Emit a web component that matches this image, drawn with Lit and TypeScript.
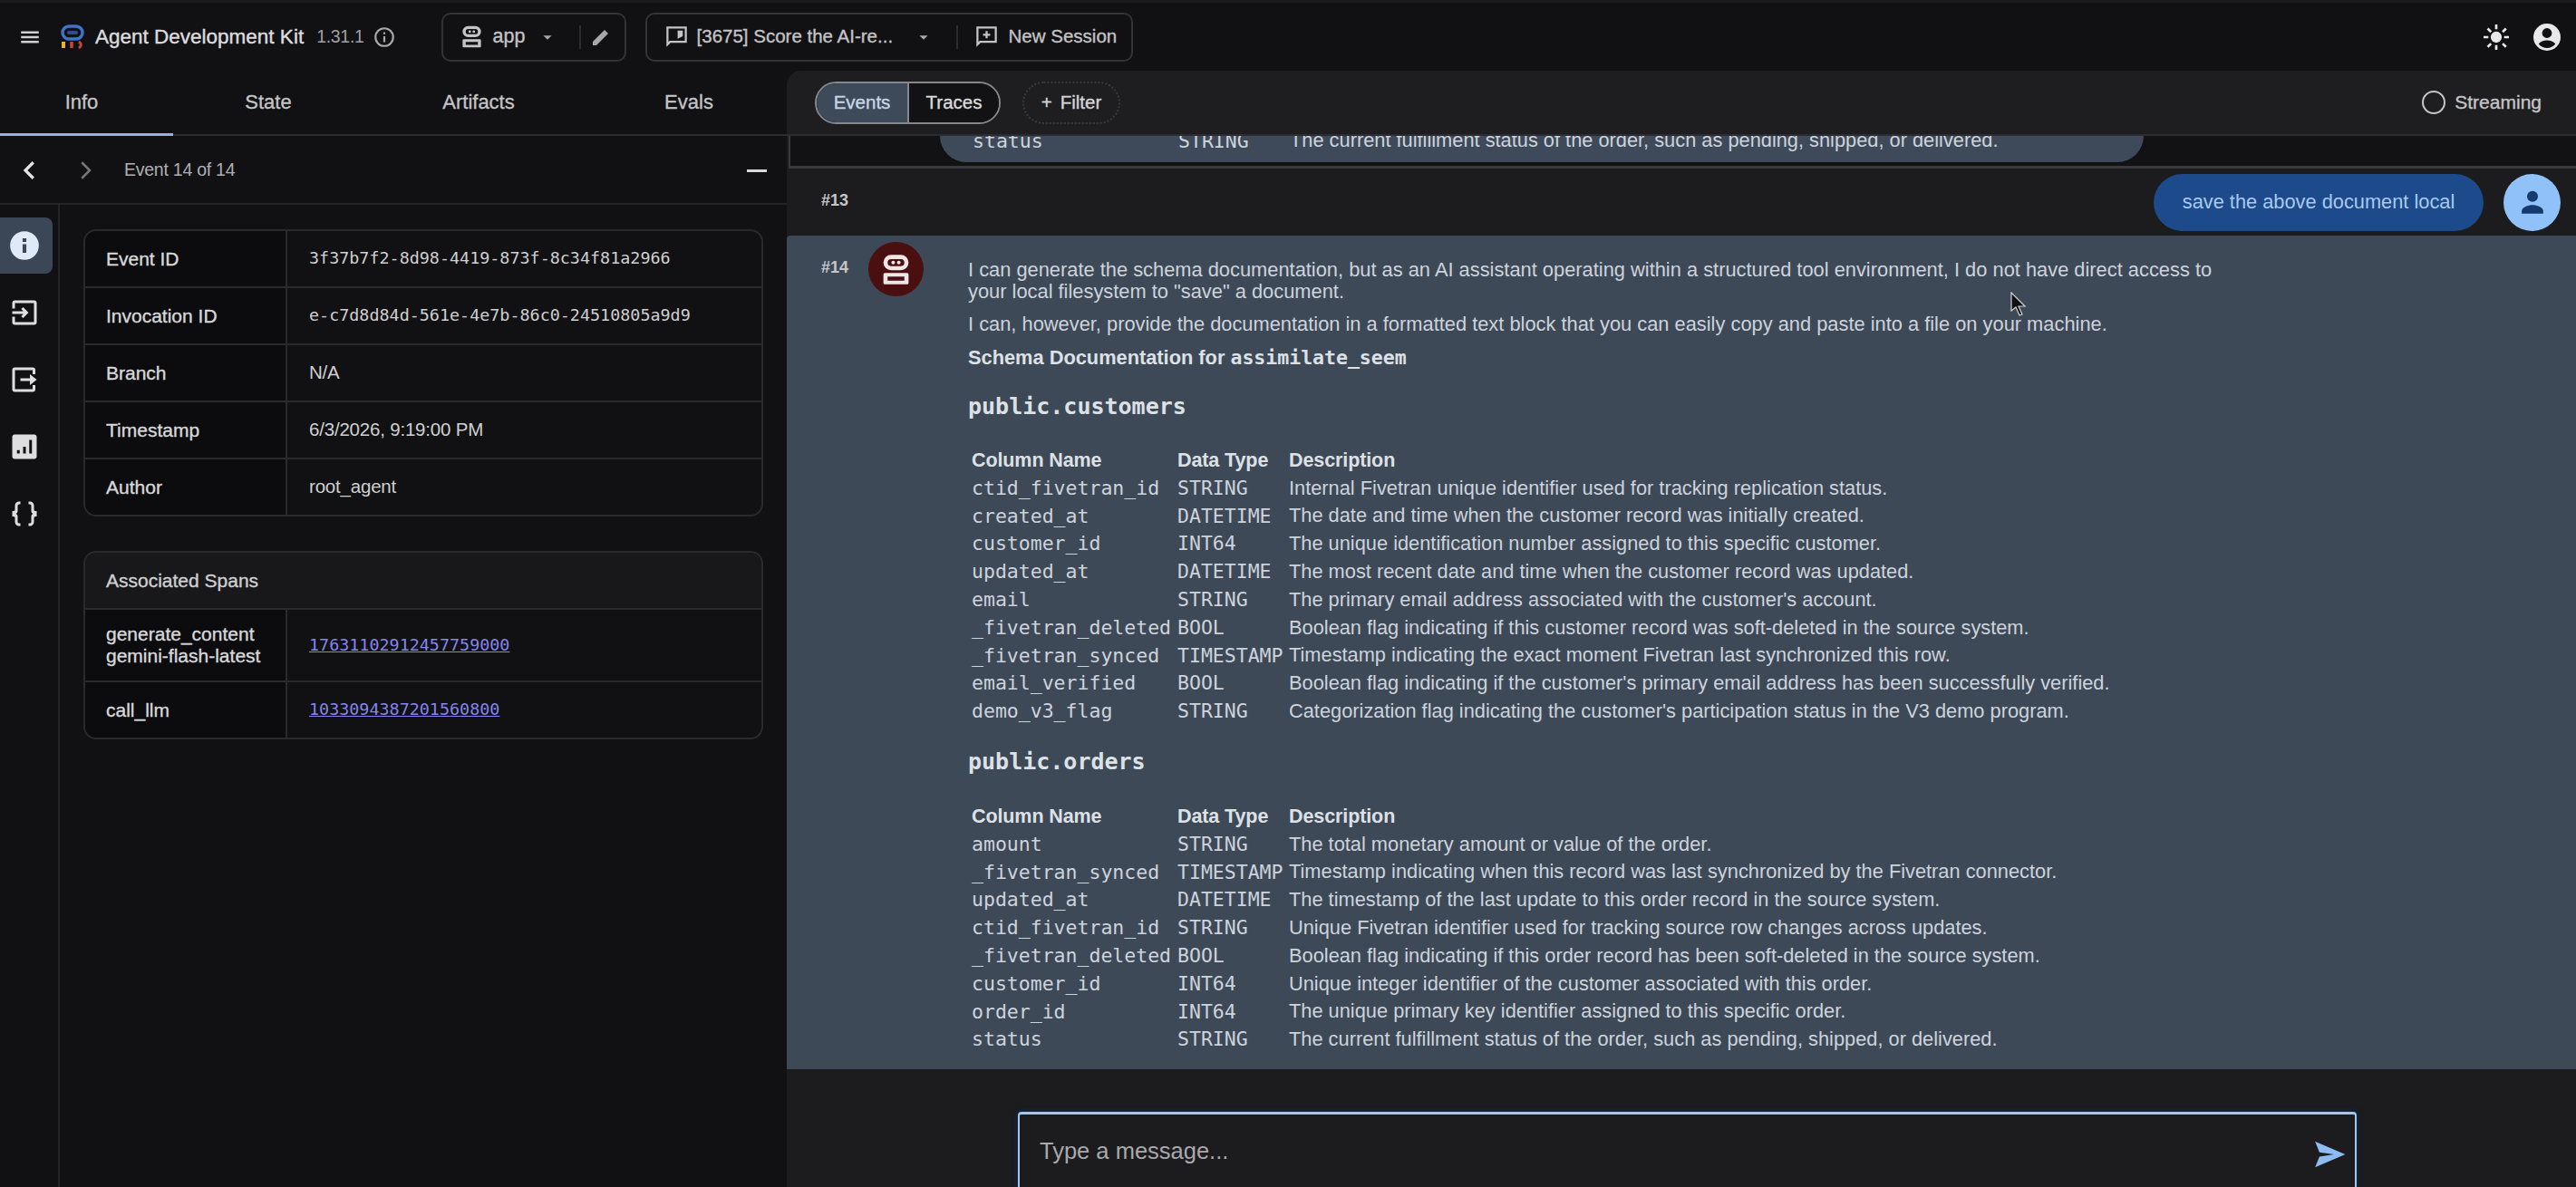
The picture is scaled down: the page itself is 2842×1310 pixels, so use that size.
import { LitElement, css, html, svg } from 'lit';
import { customElement } from 'lit/decorators.js';

type Row = [string, string, string];

const customers: Row[] = [
  ['ctid_fivetran_id', 'STRING', 'Internal Fivetran unique identifier used for tracking replication status.'],
  ['created_at', 'DATETIME', 'The date and time when the customer record was initially created.'],
  ['customer_id', 'INT64', 'The unique identification number assigned to this specific customer.'],
  ['updated_at', 'DATETIME', 'The most recent date and time when the customer record was updated.'],
  ['email', 'STRING', "The primary email address associated with the customer's account."],
  ['_fivetran_deleted', 'BOOL', 'Boolean flag indicating if this customer record was soft-deleted in the source system.'],
  ['_fivetran_synced', 'TIMESTAMP', 'Timestamp indicating the exact moment Fivetran last synchronized this row.'],
  ['email_verified', 'BOOL', "Boolean flag indicating if the customer's primary email address has been successfully verified."],
  ['demo_v3_flag', 'STRING', "Categorization flag indicating the customer's participation status in the V3 demo program."],
];

const orders: Row[] = [
  ['amount', 'STRING', 'The total monetary amount or value of the order.'],
  ['_fivetran_synced', 'TIMESTAMP', 'Timestamp indicating when this record was last synchronized by the Fivetran connector.'],
  ['updated_at', 'DATETIME', 'The timestamp of the last update to this order record in the source system.'],
  ['ctid_fivetran_id', 'STRING', 'Unique Fivetran identifier used for tracking source row changes across updates.'],
  ['_fivetran_deleted', 'BOOL', 'Boolean flag indicating if this order record has been soft-deleted in the source system.'],
  ['customer_id', 'INT64', 'Unique integer identifier of the customer associated with this order.'],
  ['order_id', 'INT64', 'The unique primary key identifier assigned to this specific order.'],
  ['status', 'STRING', 'The current fulfillment status of the order, such as pending, shipped, or delivered.'],
];

const info = [
  ['Event ID', '3f37b7f2-8d98-4419-873f-8c34f81a2966', true],
  ['Invocation ID', 'e-c7d8d84d-561e-4e7b-86c0-24510805a9d9', true],
  ['Branch', 'N/A', false],
  ['Timestamp', '6/3/2026, 9:19:00 PM', false],
  ['Author', 'root_agent', false],
] as const;

const icon = (size: number, body: unknown, cls = '') => html`<svg class=${cls} width=${size} height=${size} viewBox="0 0 24 24" fill="currentColor">${body}</svg>`;

const robot = svg`<path fill-rule="evenodd" d="M8.500 1.500h7a5.500 5.500 0 0 1 0 11h-7a5.500 5.500 0 0 1 0-11Zm0 3a2.500 2.500 0 0 0 0 5h7a2.500 2.500 0 0 0 0-5Z"/><circle cx="10" cy="7" r="1.300"/><circle cx="14" cy="7" r="1.300"/><path fill-rule="evenodd" d="M4 14.500h16a1 1 0 0 1 1 1v6a1 1 0 0 1-1 1H4a1 1 0 0 1-1-1v-6a1 1 0 0 1 1-1Zm2 2.500v3h12v-3Z"/>`;
const caret = svg`<path d="M7 10l5 5 5-5z"/>`;
const chat = svg`<path fill-rule="evenodd" d="M2 2h20v16H6l-4 4Zm2 2v13.200L5.200 16H20V4Zm9 2h5v5.500L13 14Z"/>`;
const chatAdd = svg`<path fill-rule="evenodd" d="M2 2h20v16H6l-4 4Zm2 2v13.200L5.200 16H20V4Zm7 2.500h2V9h2.500v2H13v2.500h-2V11H8.500V9H11Z"/>`;

@customElement('app-root')
export class AppRoot extends LitElement {
  static styles = css`
    :host {
      display: block;
      width: 2842px;
      height: 1310px;
      overflow: hidden;
      position: relative;
      background: #111113;
      color: #e3e3e6;
      font: 20px/1.2 'Liberation Sans', Arial, sans-serif;
    }
    svg { display: block; flex: none; }
    .mono { font-family: 'DejaVu Sans Mono', 'Liberation Mono', monospace; }

    /* toolbar */
    .bar {
      height: 78px;
      box-sizing: border-box;
      border-top: 3px solid #1b1b1e;
      display: flex;
      align-items: center;
      padding-right: 14px;
    }
    .menu { margin-left: 20px; color: #d0d0d3; }
    .logo { margin-left: 21px; }
    .title { margin-left: 12px; font-size: 22.5px; color: #dcdcdf; -webkit-text-stroke: 0.4px currentColor; }
    .version { margin-left: 14px; font-size: 19.5px; color: #a0a0a4; letter-spacing: -0.3px; }
    .info-btn { margin-left: 9px; color: #a8a8ac; }
    .box {
      height: 54px;
      box-sizing: border-box;
      border: 2px solid #333337;
      border-radius: 10px;
      display: flex;
      align-items: center;
      color: #c4c4c7;
      font-size: 20.5px;
      -webkit-text-stroke: 0.35px currentColor;
    }
    .app-box { margin-left: 50px; width: 204px; padding-left: 18px; }
    .app-box .name { margin-left: 10px; width: 49px; font-size: 21.5px; }
    .sep { width: 2px; height: 26px; background: #2c2c30; flex: none; }
    .app-box .sep { margin: 0 10px 0 24px; }
    .session-box { margin-left: 21px; width: 538px; padding-left: 19px; }
    .session-box .name { margin-left: 9px; width: 239px; white-space: nowrap; }
    .session-box .sep { margin: 0 18px 0 25px; }
    .session-box .new { margin-left: 11px; }
    .caret { color: #a8a8ac; }
    .grow { flex: 1; }
    .sun { color: #e8e8ea; margin-right: 22px; }
    .account { color: #e8e8ea; }

    .main { display: flex; height: 1232px; }

    /* left panel */
    .left { width: 868px; flex: none; display: flex; flex-direction: column; }
    .tabs {
      display: grid;
      grid-template-columns: 180px 232px 232px 224px;
      height: 72px;
      box-sizing: border-box;
      border-bottom: 2px solid #2c2c30;
      position: relative;
      font-size: 22px;
      color: #c5c5c8;
      -webkit-text-stroke: 0.3px currentColor;
    }
    .tabs > div { display: flex; align-items: center; justify-content: center; }
    .tabs > div:nth-child(4) { padding-left: 8px; }
    .tabs .underline {
      position: absolute;
      left: 0;
      bottom: -2px;
      width: 191px;
      height: 3px;
      background: #8fb4e0;
    }
    .nav {
      height: 76px;
      box-sizing: border-box;
      padding-top: 2px;
      border-bottom: 2px solid #242427;
      display: flex;
      align-items: center;
      color: #b0b0b4;
      font-size: 19.5px;
    }
    .nav .prev { margin-left: 18px; color: #e3e3e6; }
    .nav .next { margin-left: 31px; color: #77777b; }
    .nav .label { margin-left: 28px; letter-spacing: -0.25px; }
    .nav .dash { margin-left: auto; margin-right: 22px; width: 22px; height: 3px; background: #d8d8da; }
    .body { flex: 1; display: flex; min-height: 0; }
    .rail {
      width: 66px;
      flex: none;
      box-sizing: border-box;
      border-right: 2px solid #242427;
      padding-top: 14px;
      display: flex;
      flex-direction: column;
      color: #dedee1;
    }
    .rail > div {
      width: 58px;
      height: 62px;
      margin-bottom: 12px;
      display: flex;
      align-items: center;
      justify-content: center;
    }
    .rail > div svg { margin-right: 4px; }
    .rail .active { background: #3b4757; border-radius: 0 8px 8px 0; color: #dfe9f7; }
    .tables { padding: 27px 0 0 26px; width: 750px; }
    .card {
      box-sizing: border-box;
      border: 2px solid #2a2a2d;
      border-radius: 14px;
      overflow: hidden;
      width: 750px;
      margin-bottom: 38px;
      background: #111113;
      font-size: 20px;
      color: #dcdcdf;
    }
    .card .row { display: flex; height: 63px; border-bottom: 2px solid #2a2a2d; box-sizing: border-box; }
    .card .row:last-child { height: 61px; border-bottom: none; }
    .card .row.tall { height: 80px; }
    .card .key {
      width: 223px;
      flex: none;
      box-sizing: border-box;
      padding-left: 23px;
      background: #0c0c0e;
      border-right: 2px solid #2a2a2d;
      display: flex;
      align-items: center;
      font-size: 21px;
      color: #d8d8db;
      line-height: 24px;
      -webkit-text-stroke: 0.35px currentColor;
    }
    .card .val { padding-left: 24px; display: flex; align-items: center; color: #cfcfd2; font-size: 20.5px; letter-spacing: -0.2px; }
    .card .val.mono { font-size: 18.4px; letter-spacing: 0; }
    .card .head {
      height: 63px;
      box-sizing: border-box;
      padding-left: 23px;
      display: flex;
      align-items: center;
      background: #18181b;
      border-bottom: 2px solid #2a2a2d;
      font-size: 21px;
      color: #d0d0d3;
      -webkit-text-stroke: 0.35px currentColor;
    }
    .card a { color: #8484ee; text-decoration: underline; font-size: 18.4px; letter-spacing: 0; }

    /* right panel */
    .right {
      flex: 1;
      min-width: 0;
      background: #1c1b1e;
      border-top-left-radius: 16px;
      display: flex;
      flex-direction: column;
      position: relative;
    }
    .filters {
      height: 72px;
      flex: none;
      box-sizing: border-box;
      border-bottom: 2px solid #2c2c30;
      background: #1e1e21;
      border-top-left-radius: 16px;
      display: flex;
      align-items: center;
      padding: 0 38px 0 31px;
      font-size: 20.5px;
      -webkit-text-stroke: 0.35px currentColor;
    }
    .toggle {
      display: flex;
      height: 47px;
      box-sizing: border-box;
      border: 2px solid #85878c;
      border-radius: 24px;
      overflow: hidden;
      color: #dcdcdf;
    }
    .toggle > div { display: flex; align-items: center; justify-content: center; }
    .toggle .on { width: 100px; background: #3d4a5a; border-right: 2px solid #85878c; color: #c9d6e6; }
    .toggle .off { width: 99px; background: #121214; }
    .filter {
      margin-left: 24px;
      width: 108px;
      height: 47px;
      box-sizing: border-box;
      border: 2px dotted #3a3a3d;
      border-radius: 24px;
      display: flex;
      align-items: center;
      justify-content: center;
      gap: 9px;
      color: #d5d5d8;
    }
    .streaming { margin-left: auto; display: flex; align-items: center; gap: 10px; color: #c5c5c8; font-size: 21px; }
    .radio { width: 26px; height: 26px; box-sizing: border-box; border: 2.5px solid #c5c5c8; border-radius: 50%; }

    .clip {
      height: 36px;
      flex: none;
      box-sizing: border-box;
      border-bottom: 3px solid #3a3a3e;
      border-left: 2px solid #3a3a3e;
      margin-left: 2px;
      background: #121214;
      overflow: hidden;
    }
    .clip .bubble {
      margin-left: 165px;
      width: 1328px;
      height: 29px;
      background: #3e4a5a;
      border-radius: 0 0 32px 32px;
      overflow: hidden;
      position: relative;
    }
    .clip .trow { position: absolute; left: 36px; top: -10px; }

    .line { display: grid; grid-template-columns: 227px 123px 1fr; height: 30.8px; align-items: center; font-size: 21.8px; white-space: nowrap; color: #cdd3db; }
    .line .mono { font-size: 21.5px; }
    .line.th { font-weight: 700; font-size: 21.5px; letter-spacing: -0.1px; color: #dde1e6; }

    .user { height: 74px; flex: none; display: flex; align-items: center; padding-right: 17px; }
    .user .num { margin-top: -2px; }
    .num { font-size: 18px; font-weight: 700; color: #c5c5c8; width: 34px; margin-left: 38px; }
    .user .say {
      margin-left: auto;
      width: 364px;
      height: 63px;
      border-radius: 32px;
      background: #1c4a8a;
      color: #a9c9ef;
      display: flex;
      align-items: center;
      justify-content: center;
      font-size: 21.8px;
    }
    .user .me {
      margin-left: 22px;
      width: 63px;
      height: 63px;
      border-radius: 50%;
      background: #90c2f9;
      color: #143a70;
      display: flex;
      align-items: center;
      justify-content: center;
    }

    .agent {
      height: 920px;
      flex: none;
      box-sizing: border-box;
      background: #3e4958;
      display: flex;
      border-top-left-radius: 4px;
      padding-top: 7px;
      color: #cdd3db;
      font-size: 21.85px;
    }
    .agent .num { margin-top: 18px; }
    .avatar {
      width: 61px;
      height: 60px;
      border-radius: 50%;
      background: #4a0f10;
      color: #f0e6e6;
      display: flex;
      align-items: center;
      justify-content: center;
      margin-left: 18px;
      flex: none;
    }
    .content { margin-left: 49px; width: 1400px; padding-top: 18.5px; }
    .content p { margin: 0; line-height: 24px; }
    .content .gap { margin-top: 12px; }
    .content .doc { margin-top: 13px; font-weight: 700; color: #dde1e6; font-size: 21.8px; }
    .content .doc .mono { font-size: 21.5px; }
    .content h3 {
      margin: 27px 0 30px;
      font-size: 25px;
      line-height: 30px;
      font-weight: 700;
      color: #dde1e6;
    }
    .content h3.second { margin-top: 26px; }
    .lines { margin-left: 4px; }
    .lines .th { margin-bottom: -1px; }

    .composer { flex: 1; position: relative; }
    .input {
      position: absolute;
      left: 255px;
      top: 47px;
      width: 1477px;
      height: 90px;
      box-sizing: border-box;
      border: 2px solid #a3c6ef;
      border-top-width: 3px;
      border-radius: 4px;
      box-shadow: 0 0 6px #0d3160;
      display: flex;
      align-items: flex-start;
      padding: 25px 9px 0 22px;
      font-size: 25.5px;
      color: #a9a9ad;
    }
    .input svg { margin: 0 0 0 auto; color: #8dbcf2; }

    .cursor { position: absolute; left: 2218px; top: 322px; }
  `;

  private row(r: Row) {
    return html`<div class="line"><span class="mono">${r[0]}</span><span class="mono">${r[1]}</span><span>${r[2]}</span></div>`;
  }

  private th() {
    return html`<div class="line th"><span>Column Name</span><span>Data Type</span><span>Description</span></div>`;
  }

  private logo() {
    return html`<svg class="logo" width="26" height="28" viewBox="0 0 26 28" fill="none">
      <rect x="2" y="2" width="22" height="14" rx="7" stroke="#3f73c8" stroke-width="3.500"/>
      <rect x="7" y="7" width="12" height="4" rx="2" fill="#2c4f8f"/>
      <path d="M3 19v7" stroke="#e8b12e" stroke-width="4"/>
      <path d="M12 19v7" stroke="#c9443a" stroke-width="3.500"/>
      <path d="M20 19c3 2 3 5 0 7" stroke="#c9443a" stroke-width="3"/>
    </svg>`;
  }

  private toolbar() {
    return html`<div class="bar">
      ${icon(26, svg`<path d="M3 6h18v2.400H3zM3 10.800h18v2.400H3zM3 15.600h18V18H3z"/>`, 'menu')}
      ${this.logo()}
      <div class="title">Agent Development Kit</div>
      <div class="version">1.31.1</div>
      ${icon(26, svg`<path fill-rule="evenodd" d="M12 2a10 10 0 1 0 0 20 10 10 0 0 0 0-20Zm0 18a8 8 0 1 1 0-16 8 8 0 0 1 0 16Zm-1-9h2v6h-2Zm0-4h2v2h-2Z"/>`, 'info-btn')}
      <div class="box app-box">
        ${icon(27, robot)}
        <div class="name">app</div>
        ${icon(22, caret, 'caret')}
        <div class="sep"></div>
        ${icon(24, svg`<path d="M3 21v-4L16 4l4 4L7 21Z"/>`, 'caret')}
      </div>
      <div class="box session-box">
        ${icon(27, chat)}
        <div class="name">[3675] Score the AI-re...</div>
        ${icon(22, caret, 'caret')}
        <div class="sep"></div>
        ${icon(27, chatAdd)}
        <div class="new">New Session</div>
      </div>
      <div class="grow"></div>
      ${icon(32, svg`<circle cx="12" cy="12" r="4.600"/><path d="M11 1.500h2v4h-2zM11 18.500h2v4h-2zM1.500 11h4v2h-4zM18.500 11h4v2h-4zM4.200 5.600l1.400-1.400 2.800 2.800L7 8.400zM16.600 18l1.400-1.400 2.800 2.800-1.400 1.400zM4.200 19.400 7 16.600 8.400 18l-2.800 2.800zM16.600 7l2.800-2.800 1.400 1.400L18 8.400z"/>`, 'sun')}
      ${icon(36, svg`<path fill-rule="evenodd" d="M12 2a10 10 0 1 0 0 20 10 10 0 0 0 0-20Zm0 3.400a3.600 3.600 0 1 1 0 7.200 3.600 3.600 0 0 1 0-7.200Zm0 14.600a8 8 0 0 1-6.200-3c1.400-1.800 3.700-2.600 6.200-2.600s4.800.8 6.200 2.600a8 8 0 0 1-6.200 3Z"/>`, 'account')}
    </div>`;
  }

  private leftPanel() {
    return html`<div class="left">
      <div class="tabs">
        <div>Info</div><div>State</div><div>Artifacts</div><div>Evals</div>
        <span class="underline"></span>
      </div>
      <div class="nav">
        ${icon(30, svg`<path d="M15 5l-7 7 7 7" fill="none" stroke="currentColor" stroke-width="2.600"/>`, 'prev')}
        ${icon(30, svg`<path d="M9 5l7 7-7 7" fill="none" stroke="currentColor" stroke-width="2"/>`, 'next')}
        <div class="label">Event 14 of 14</div>
        <div class="dash"></div>
      </div>
      <div class="body">
        <div class="rail">
          <div class="active">${icon(38, svg`<path fill-rule="evenodd" d="M12 2a10 10 0 1 0 0 20 10 10 0 0 0 0-20Zm-1.300 9h2.600v6h-2.600Zm0-4h2.600v2.500h-2.600Z"/>`)}</div>
          <div>${icon(36, svg`<path d="M5 3h14a2 2 0 0 1 2 2v14a2 2 0 0 1-2 2H5a2 2 0 0 1-2-2v-4h2v4h14V5H5v4H3V5a2 2 0 0 1 2-2Zm6 5 4 4-4 4-1.400-1.400 1.600-1.600H3v-2h8.200l-1.600-1.600Z"/>`)}</div>
          <div>${icon(36, svg`<path d="M5 3h13a2 2 0 0 1 2 2v3h-2V5H5v14h13v-3h2v3a2 2 0 0 1-2 2H5a2 2 0 0 1-2-2V5a2 2 0 0 1 2-2Zm11 5 5 4-5 4v-3H9v-2h7Z"/>`)}</div>
          <div>${icon(36, svg`<path fill-rule="evenodd" d="M5 3h14a2 2 0 0 1 2 2v14a2 2 0 0 1-2 2H5a2 2 0 0 1-2-2V5a2 2 0 0 1 2-2Zm10.500 4v10h2V7Zm-4.500 5v5h2v-5Zm-4.500 2.500V17h2v-2.500Z"/>`)}</div>
          <div>${icon(36, svg`<path d="M9 3v2H8a1 1 0 0 0-1 1v4a2 2 0 0 1-1.200 2A2 2 0 0 1 7 14v4a1 1 0 0 0 1 1h1v2H8a3 3 0 0 1-3-3v-3a1 1 0 0 0-1-1H3v-4h1a1 1 0 0 0 1-1V6a3 3 0 0 1 3-3Zm6 0h1a3 3 0 0 1 3 3v3a1 1 0 0 0 1 1h1v4h-1a1 1 0 0 0-1 1v3a3 3 0 0 1-3 3h-1v-2h1a1 1 0 0 0 1-1v-4a2 2 0 0 1 1.200-2A2 2 0 0 1 17 10V6a1 1 0 0 0-1-1h-1Z"/>`)}</div>
        </div>
        <div class="tables">
          <div class="card">
            ${info.map(([k, v, m]) => html`<div class="row"><div class="key">${k}</div><div class="val ${m ? 'mono' : ''}">${v}</div></div>`)}
          </div>
          <div class="card">
            <div class="head">Associated Spans</div>
            <div class="row tall"><div class="key">generate_content<br />gemini-flash-latest</div><div class="val"><a class="mono">17631102912457759000</a></div></div>
            <div class="row"><div class="key">call_llm</div><div class="val"><a class="mono">1033094387201560800</a></div></div>
          </div>
        </div>
      </div>
    </div>`;
  }

  private rightPanel() {
    return html`<div class="right">
      <div class="filters">
        <div class="toggle"><div class="on">Events</div><div class="off">Traces</div></div>
        <div class="filter"><span>+</span><span>Filter</span></div>
        <div class="streaming"><span class="radio"></span>Streaming</div>
      </div>
      <div class="clip"><div class="bubble"><div class="trow">${this.row(orders[7])}</div></div></div>
      <div class="user">
        <div class="num">#13</div>
        <div class="say">save the above document local</div>
        <div class="me">${icon(38, svg`<circle cx="12" cy="8" r="3.800"/><path d="M4.500 20v-1.800c0-2.700 4.500-4.200 7.500-4.200s7.500 1.500 7.500 4.200V20Z"/>`)}</div>
      </div>
      <div class="agent">
        <div class="num">#14</div>
        <div class="avatar">${icon(37, robot)}</div>
        <div class="content">
          <p>I can generate the schema documentation, but as an AI assistant operating within a structured tool environment, I do not have direct access to<br />your local filesystem to "save" a document.</p>
          <p class="gap">I can, however, provide the documentation in a formatted text block that you can easily copy and paste into a file on your machine.</p>
          <p class="doc">Schema Documentation for <span class="mono">assimilate_seem</span></p>
          <h3 class="mono">public.customers</h3>
          <div class="lines">${this.th()}${customers.map((r) => this.row(r))}</div>
          <h3 class="mono second">public.orders</h3>
          <div class="lines">${this.th()}${orders.map((r) => this.row(r))}</div>
        </div>
      </div>
      <div class="composer">
        <div class="input">Type a message...${icon(38, svg`<path d="M2 21l21-9L2 3l3 7.500L15 12 5 13.500z"/>`)}</div>
      </div>
    </div>`;
  }

  render() {
    return html`
      ${this.toolbar()}
      <div class="main">${this.leftPanel()}${this.rightPanel()}</div>
      <svg class="cursor" width="18" height="28" viewBox="0 0 18 28"><path d="M1 1v20l5-4 4 9 3-1-4-9h7Z" fill="#111" stroke="#cfd3d8" stroke-width="1.200"/></svg>
    `;
  }
}

declare global {
  interface HTMLElementTagNameMap {
    'app-root': AppRoot;
  }
}
